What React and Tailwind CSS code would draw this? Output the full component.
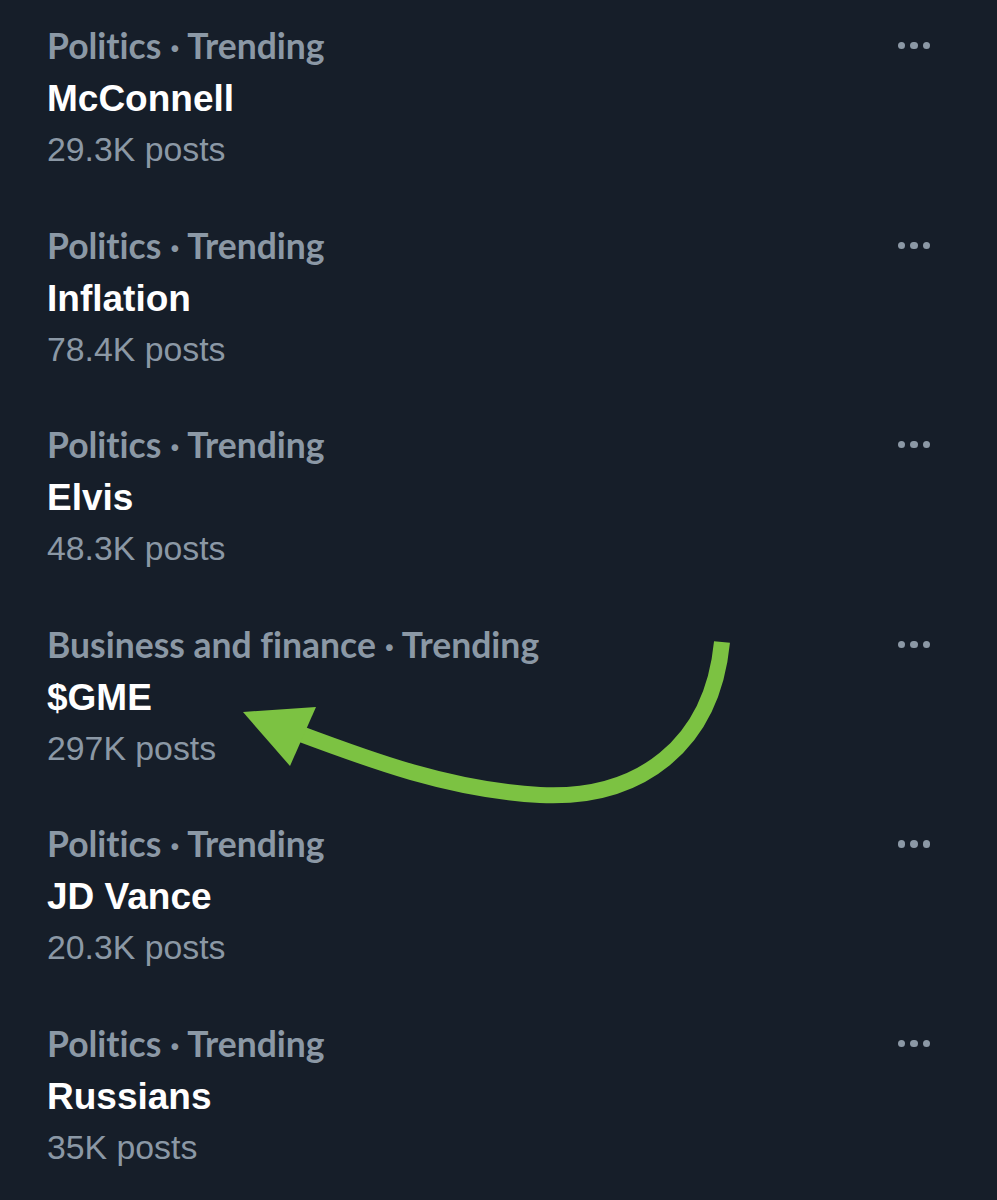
const trends = [
  { category: "Politics", title: "McConnell", posts: "29.3K posts" },
  { category: "Politics", title: "Inflation", posts: "78.4K posts" },
  { category: "Politics", title: "Elvis", posts: "48.3K posts" },
  { category: "Business and finance", title: "$GME", posts: "297K posts" },
  { category: "Politics", title: "JD Vance", posts: "20.3K posts" },
  { category: "Politics", title: "Russians", posts: "35K posts" },
];

function TrendRow({ trend }) {
  return (
    <div className="h-[199.6px] flex justify-between pl-[47px] pr-[67px]">
      <div className="flex flex-col">
        <span className="text-[35.5px] leading-[51px] mb-[2px] font-bold text-[#8b98a5] font-['Lato',sans-serif] [font-variant-ligatures:none]">
          {trend.category} · Trending
        </span>
        <span className="text-[37px] leading-[51px] font-bold text-white font-['Liberation_Sans',sans-serif]">
          {trend.title}
        </span>
        <span className="text-[33.8px] leading-[50px] text-[#8b98a5] font-['Liberation_Sans',sans-serif]">
          {trend.posts}
        </span>
      </div>
      <div className="flex gap-[5px] mt-[22px] h-[7px]">
        <span className="w-[7.3px] h-[7.3px] rounded-full bg-[#8b98a5]" />
        <span className="w-[7.3px] h-[7.3px] rounded-full bg-[#8b98a5]" />
        <span className="w-[7.3px] h-[7.3px] rounded-full bg-[#8b98a5]" />
      </div>
    </div>
  );
}

export default function App() {
  return (
    <div className="relative w-[997px] h-[1200px] bg-[#161e29] pt-[20px] overflow-hidden">
      {trends.map((t) => (
        <TrendRow key={t.title} trend={t} />
      ))}
      {/* green annotation arrow */}
      <svg
        className="absolute left-0 top-0 pointer-events-none"
        width="997"
        height="1200"
        viewBox="0 0 997 1200"
      >
        <path
          d="M 722 642 C 712 745, 640 800, 540 795 C 450 790, 370 760, 298 733"
          fill="none"
          stroke="#7cc242"
          strokeWidth="16"
        />
        <polygon points="243,712 316,707 290,766" fill="#7cc242" />
      </svg>
    </div>
  );
}
